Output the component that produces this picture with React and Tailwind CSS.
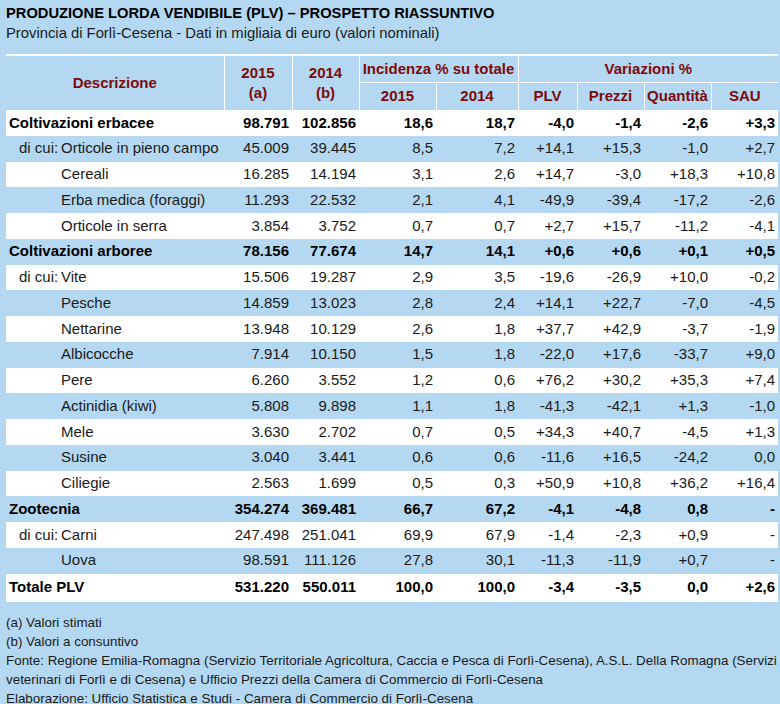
const rows = [
  { t: "main", l: "Coltivazioni erbacee", v: ["98.791", "102.856", "18,6", "18,7", "-4,0", "-1,4", "-2,6", "+3,3"] },
  { t: "first", l: "Orticole in pieno campo", v: ["45.009", "39.445", "8,5", "7,2", "+14,1", "+15,3", "-1,0", "+2,7"] },
  { t: "sub", l: "Cereali", v: ["16.285", "14.194", "3,1", "2,6", "+14,7", "-3,0", "+18,3", "+10,8"] },
  { t: "sub", l: "Erba medica (foraggi)", v: ["11.293", "22.532", "2,1", "4,1", "-49,9", "-39,4", "-17,2", "-2,6"] },
  { t: "sub", l: "Orticole in serra", v: ["3.854", "3.752", "0,7", "0,7", "+2,7", "+15,7", "-11,2", "-4,1"] },
  { t: "main", l: "Coltivazioni arboree", v: ["78.156", "77.674", "14,7", "14,1", "+0,6", "+0,6", "+0,1", "+0,5"] },
  { t: "first", l: "Vite", v: ["15.506", "19.287", "2,9", "3,5", "-19,6", "-26,9", "+10,0", "-0,2"] },
  { t: "sub", l: "Pesche", v: ["14.859", "13.023", "2,8", "2,4", "+14,1", "+22,7", "-7,0", "-4,5"] },
  { t: "sub", l: "Nettarine", v: ["13.948", "10.129", "2,6", "1,8", "+37,7", "+42,9", "-3,7", "-1,9"] },
  { t: "sub", l: "Albicocche", v: ["7.914", "10.150", "1,5", "1,8", "-22,0", "+17,6", "-33,7", "+9,0"] },
  { t: "sub", l: "Pere", v: ["6.260", "3.552", "1,2", "0,6", "+76,2", "+30,2", "+35,3", "+7,4"] },
  { t: "sub", l: "Actinidia (kiwi)", v: ["5.808", "9.898", "1,1", "1,8", "-41,3", "-42,1", "+1,3", "-1,0"] },
  { t: "sub", l: "Mele", v: ["3.630", "2.702", "0,7", "0,5", "+34,3", "+40,7", "-4,5", "+1,3"] },
  { t: "sub", l: "Susine", v: ["3.040", "3.441", "0,6", "0,6", "-11,6", "+16,5", "-24,2", "0,0"] },
  { t: "sub", l: "Ciliegie", v: ["2.563", "1.699", "0,5", "0,3", "+50,9", "+10,8", "+36,2", "+16,4"] },
  { t: "main", l: "Zootecnia", v: ["354.274", "369.481", "66,7", "67,2", "-4,1", "-4,8", "0,8", "-"] },
  { t: "first", l: "Carni", v: ["247.498", "251.041", "69,9", "67,9", "-1,4", "-2,3", "+0,9", "-"] },
  { t: "sub", l: "Uova", v: ["98.591", "111.126", "27,8", "30,1", "-11,3", "-11,9", "+0,7", "-"] },
  { t: "main", l: "Totale PLV", v: ["531.220", "550.011", "100,0", "100,0", "-3,4", "-3,5", "0,0", "+2,6"] },
];

const widths = [218, 68, 67, 77, 82, 59, 67, 67, 67];

export default function App() {
  return (
    <div className="w-[780px] h-[704px] bg-[#b4d8f1] font-['Liberation_Sans',Arial,sans-serif] text-[#1a1a1a] overflow-hidden">
      {/* titolo */}
      <div className="pl-[6px] pt-[3px] leading-[20px] whitespace-nowrap">
        <div className="text-[14.7px] font-bold text-black">
          PRODUZIONE LORDA VENDIBILE (PLV) – PROSPETTO RIASSUNTIVO
        </div>
        <div className="text-[14.8px]">
          Provincia di Forlì-Cesena - Dati in migliaia di euro (valori nominali)
        </div>
      </div>

      <table className="ml-[6px] mt-[11px] w-[772px] border-collapse table-fixed">
        <colgroup>
          {widths.map((w, i) => (
            <col key={i} style={{ width: w }} />
          ))}
        </colgroup>
        <thead className="text-[#7d0a0a] font-bold text-[15px] whitespace-nowrap">
          <tr className="h-[27px] border-t-2 border-white">
            <th rowSpan={2} className="p-0 font-bold">Descrizione</th>
            <th rowSpan={2} className="p-0 border-l border-white leading-[20px] font-bold">
              2015
              <br />
              (a)
            </th>
            <th rowSpan={2} className="p-0 border-l border-white leading-[20px] font-bold">
              2014
              <br />
              (b)
            </th>
            <th colSpan={2} className="p-0 border-l border-b border-white font-bold">
              Incidenza % su totale
            </th>
            <th colSpan={4} className="p-0 border-l border-b border-white font-bold">
              Variazioni %
            </th>
          </tr>
          <tr className="h-[28px]">
            <th className="p-0 border-l border-white font-bold">2015</th>
            <th className="p-0 border-l border-white font-bold">2014</th>
            <th className="p-0 border-l border-white font-bold">PLV</th>
            <th className="p-0 border-l border-white font-bold">Prezzi</th>
            <th className="p-0 border-l border-white font-bold">Quantità</th>
            <th className="p-0 border-l border-white font-bold">SAU</th>
          </tr>
        </thead>
        <tbody className="text-[15px]">
          {rows.map((r, i) => (
            <tr
              key={i}
              className={`${i === rows.length - 1 ? "h-[28px]" : "h-[25.75px]"} ${
                i % 2 === 0 ? "bg-white" : "bg-[#b4d8f1]"
              } ${r.t === "main" ? "font-bold text-black" : ""}`}
            >
              <td className="p-0 whitespace-nowrap">
                {r.t === "main" && <span className="pl-[3px]">{r.l}</span>}
                {r.t === "first" && (
                  <span className="pl-[13px]">
                    <span className="inline-block w-[42px]">di cui:</span>
                    {r.l}
                  </span>
                )}
                {r.t === "sub" && <span className="pl-[55px]">{r.l}</span>}
              </td>
              {r.v.map((v, j) => (
                <td key={j} className="p-0 pr-[3px] text-right whitespace-nowrap">
                  {v}
                </td>
              ))}
            </tr>
          ))}
        </tbody>
      </table>

      {/* note */}
      <div className="pl-[6px] pt-[11px] text-[13.4px] leading-[19px]">
        <div>(a) Valori stimati</div>
        <div>(b) Valori a consuntivo</div>
        <div>
          Fonte: Regione Emilia-Romagna (Servizio Territoriale Agricoltura, Caccia e Pesca di Forlì-Cesena), A.S.L. Della Romagna (Servizi veterinari di Forlì e di Cesena) e Ufficio Prezzi della Camera di Commercio di Forlì-Cesena
        </div>
        <div>Elaborazione: Ufficio Statistica e Studi - Camera di Commercio di Forlì-Cesena</div>
      </div>
    </div>
  );
}
